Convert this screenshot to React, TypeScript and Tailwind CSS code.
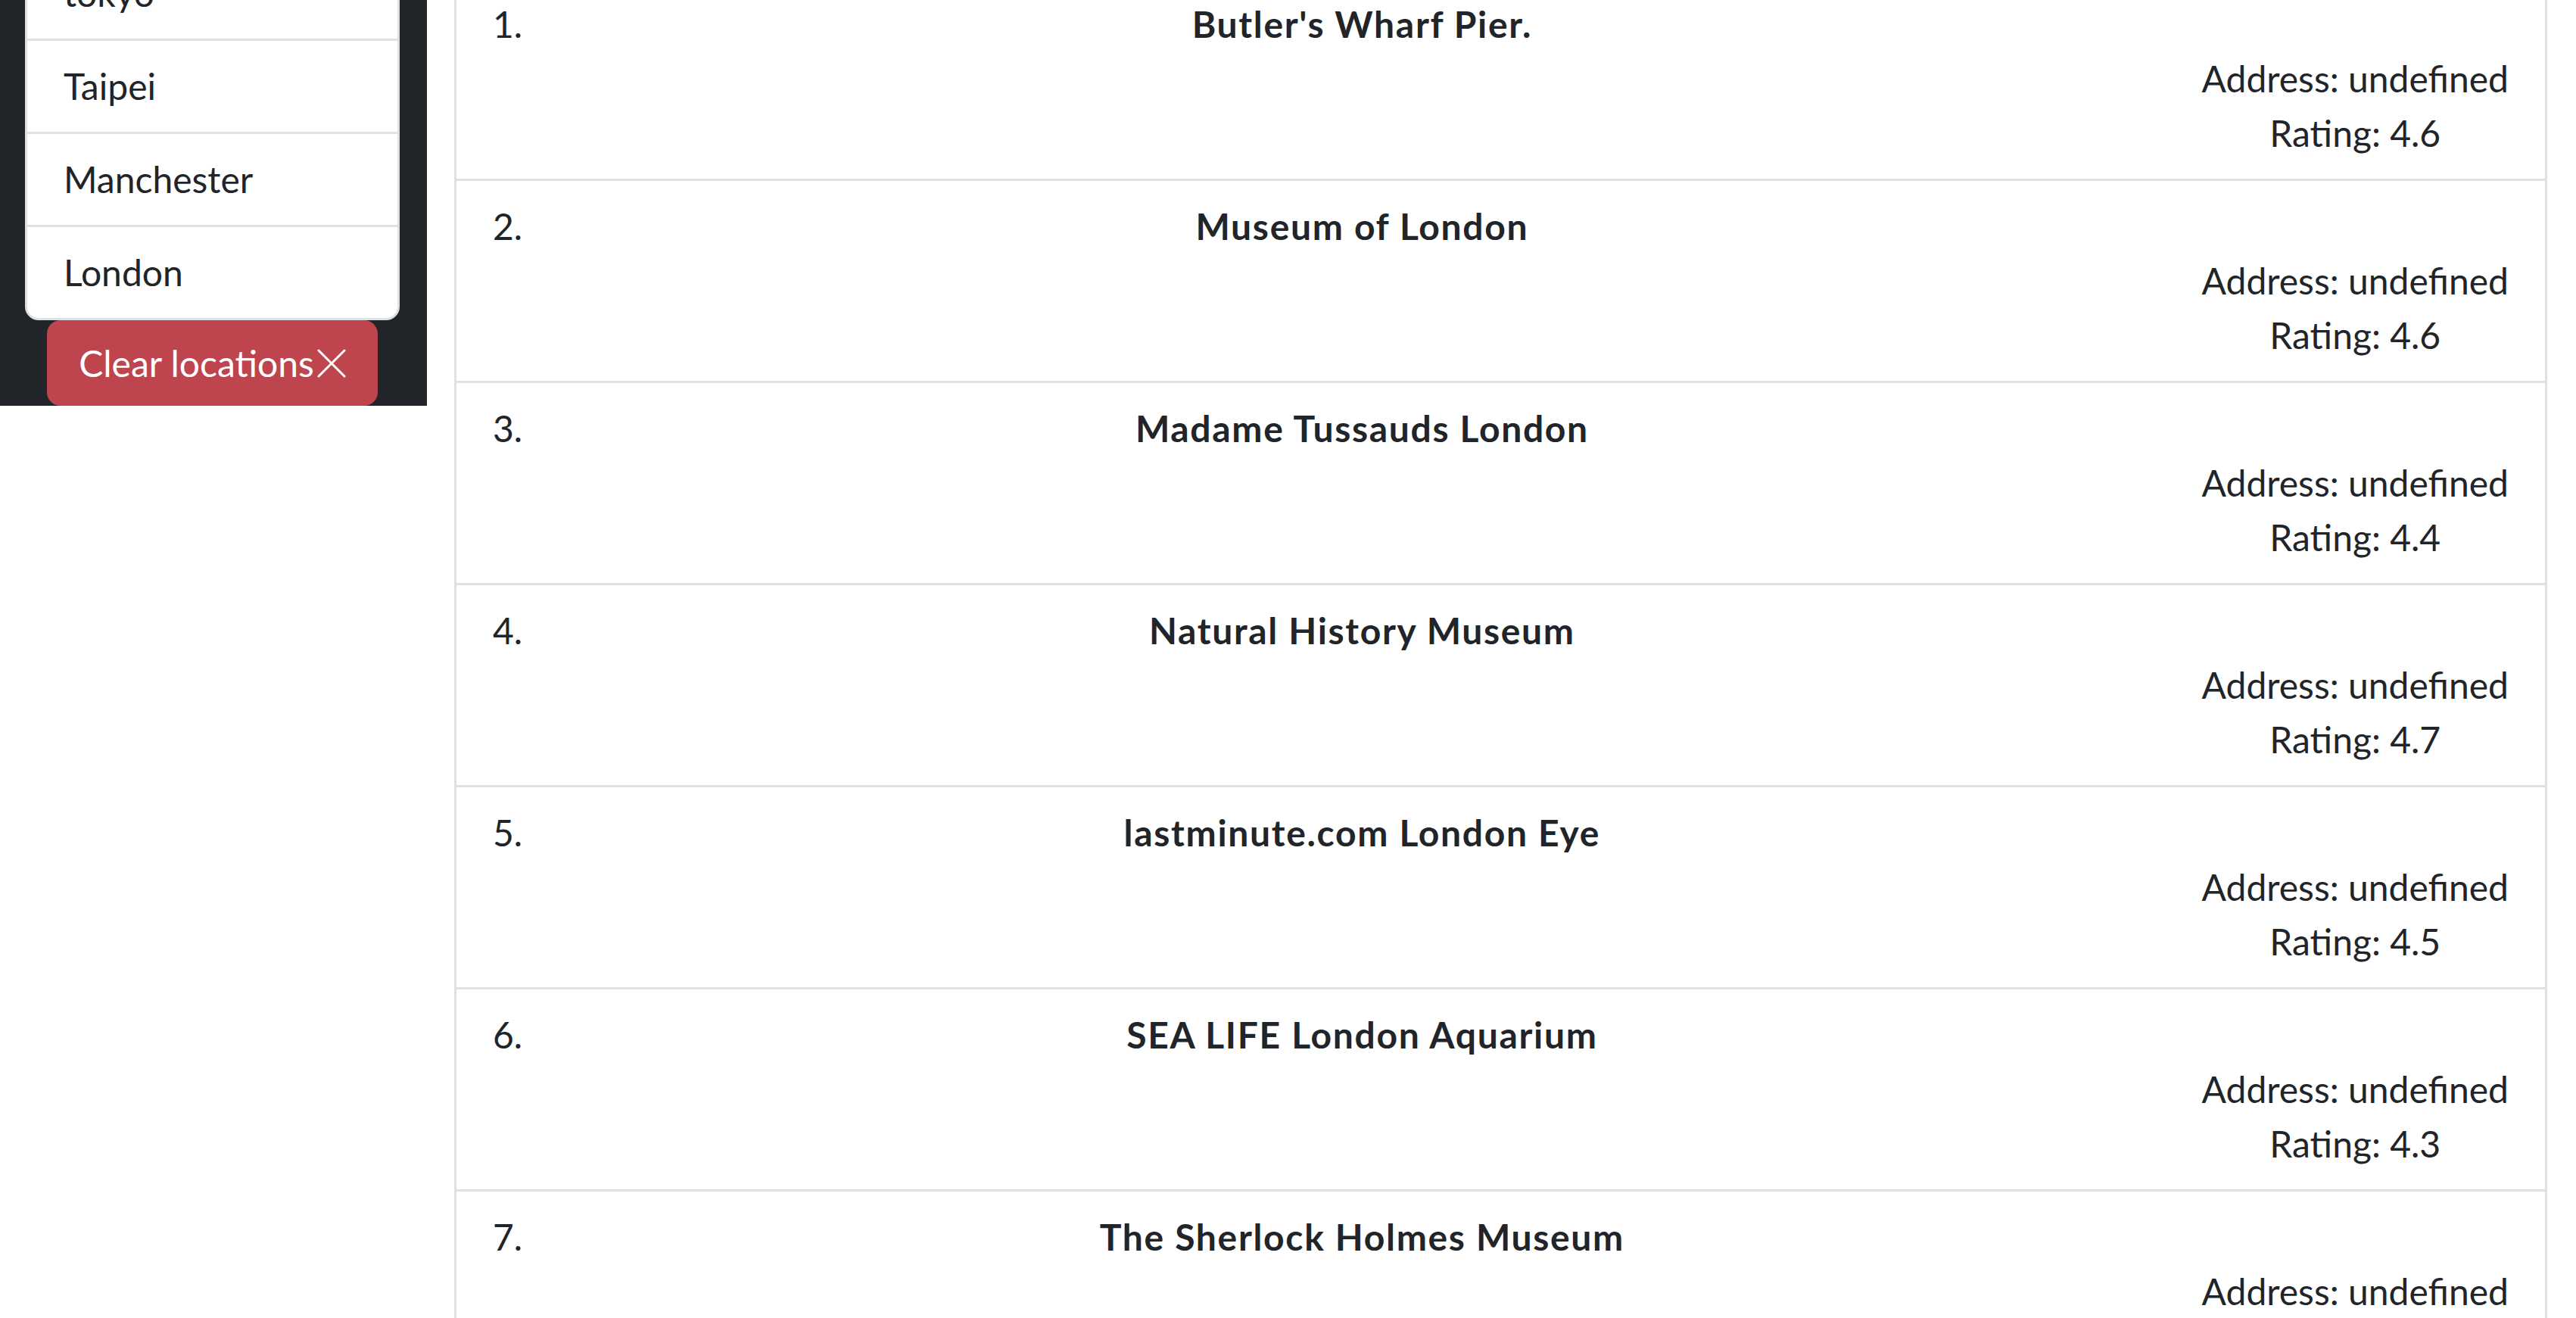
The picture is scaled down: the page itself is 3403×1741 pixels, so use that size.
import React from "react"

interface Place {
  name: string
  address?: string
  rating: number
}

const locations = ["tokyo", "Taipei", "Manchester", "London"]

const places: Place[] = [
  { name: "Butler's Wharf Pier.", rating: 4.6 },
  { name: "Museum of London", rating: 4.6 },
  { name: "Madame Tussauds London", rating: 4.4 },
  { name: "Natural History Museum", rating: 4.7 },
  { name: "lastminute.com London Eye", rating: 4.5 },
  { name: "SEA LIFE London Aquarium", rating: 4.3 },
  { name: "The Sherlock Holmes Museum", rating: 4.5 },
]

const CloseIcon = () => (
  <svg width="38" height="38" viewBox="0 0 38 38" className="ml-[4px] shrink-0">
    <path d="M2 2 L36 36 M36 2 L2 36" stroke="currentColor" strokeWidth="3" strokeLinecap="round" />
  </svg>
)

const Sidebar: React.FC = () => {
  return (
    <aside className="w-[564px] shrink-0 bg-[#212529] pl-[33px] pr-[36px] flex flex-col">
      {/* list is scrolled, first item sits above the fold */}
      <ul className="-mt-[72px] bg-white border-[3px] border-[#dee2e6] rounded-[18px] overflow-hidden">
        {locations.map((loc, i) => (
          <li
            key={loc}
            className={`px-[48px] py-[24px] leading-[72px] text-[48px] text-[#212529] ${i > 0 ? "border-t-[3px] border-[#dee2e6]" : ""}`}
          >
            {loc}
          </li>
        ))}
      </ul>
      <button className="self-center w-[437px] h-[113px] flex items-center justify-center rounded-[18px] bg-[#be444d] text-white text-[48px] leading-[72px]">
        <span>Clear locations</span>
        <CloseIcon />
      </button>
    </aside>
  )
}

const PlaceRow: React.FC<{ place: Place; index: number }> = ({ place, index }) => {
  return (
    <li className="flex items-start px-[48px] py-[24px] border-t-[3px] border-[#dee2e6] first:border-t-0 text-[48px] leading-[72px] text-[#212529]">
      <span>{index + 1}.</span>
      <div className="flex-1 text-center font-bold tracking-[0.035em]">{place.name}</div>
      <div className="mt-[72px] text-center">
        <div>Address: {place.address === undefined ? "undefined" : place.address}</div>
        <div>Rating: {place.rating}</div>
      </div>
    </li>
  )
}

export default function App() {
  return (
    <div className="min-h-screen bg-white font-['Lato','Open_Sans',sans-serif] flex items-start overflow-hidden h-[1741px]">
      <Sidebar />
      <main className="flex-1 ml-[36px] mr-[38px] -mt-[31px]">
        <ol className="border-[3px] border-[#dee2e6] rounded-[18px] bg-white">
          {places.map((p, i) => (
            <PlaceRow key={p.name} place={p} index={i} />
          ))}
        </ol>
      </main>
    </div>
  )
}
